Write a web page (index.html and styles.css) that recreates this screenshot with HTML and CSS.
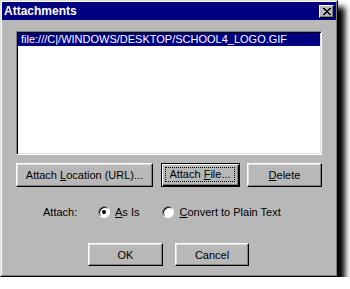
FILE: index.html
```html
<!DOCTYPE html>
<html lang="en">
<head>
    <meta charset="UTF-8">
    <title>Attachments</title>
    <link rel="stylesheet" href="styles.css">
</head>
<body>
    <div class="dialog">
        <div class="titlebar">
            <span class="title">Attachments</span>
            <button class="close" type="button">
                <svg width="8" height="7" viewBox="0 0 8 7">
                    <path d="M0 0h2v1h1v1h2v-1h1v-1h2v1h-1v1h-1v1h-1v1h1v1h1v1h1v1h-2v-1h-1v-1h-2v1h-1v1h-2v-1h1v-1h1v-1h1v-1h-1v-1h-1v-1h-1z" fill="#000"/>
                </svg>
            </button>
        </div>
        <div class="content">
            <div class="list">
                <div class="item selected">file:///C|/WINDOWS/DESKTOP/SCHOOL4_LOGO.GIF</div>
            </div>
            <div class="buttons">
                <button class="btn btn-location" type="button">Attach <u>L</u>ocation (URL)...</button>
                <button class="btn btn-file focused" type="button"><span class="focus">Attach <u>F</u>ile...</span></button>
                <button class="btn btn-delete" type="button"><u>D</u>elete</button>
            </div>
            <div class="attach-row">
                <span class="attach-label">Attach:</span>
                <span class="radio checked"></span>
                <span class="radio-label"><u>A</u>s Is</span>
                <span class="radio second"></span>
                <span class="radio-label"><u>C</u>onvert to Plain Text</span>
            </div>
            <div class="actions">
                <button class="btn btn-ok" type="button">OK</button>
                <button class="btn btn-cancel" type="button">Cancel</button>
            </div>
        </div>
    </div>
</body>
</html>
```

FILE: styles.css
```css
body {
    margin: 0;
    padding: 0;
    background: #fff;
    font-family: "Liberation Sans", Arial, sans-serif;
    font-size: 11px;
    color: #000;
}

.dialog {
    width: 338px;
    height: 277px;
    box-sizing: border-box;
    padding: 1px;
    background: #b8b8b8;
    border: 1px solid;
    border-color: #dfdfdf #000 #000 #dfdfdf;
    box-shadow: inset -1px -1px #808080, inset 1px 1px #fff, 7px 7px 6px #000;
}

.titlebar {
    height: 18px;
    background: #000080;
    display: flex;
    align-items: center;
    justify-content: space-between;
    padding: 0 2px 0 2px;
}

.title {
    color: #fff;
    font-weight: bold;
    font-size: 12px;
}

.close {
    width: 15px;
    height: 13px;
    padding: 0;
    margin: 0;
    display: flex;
    align-items: center;
    justify-content: center;
    background: #b8b8b8;
    border: 1px solid;
    border-color: #fff #000 #000 #fff;
    box-shadow: inset -1px -1px #808080;
}

.content {
    padding: 11px 0 0 14px;
}

.list {
    width: 306px;
    height: 124px;
    box-sizing: border-box;
    background: #fff;
    border: 1px solid;
    border-color: #808080 #fff #fff #808080;
    box-shadow: inset 1px 1px #000, inset -1px -1px #dfdfdf;
    padding: 1px;
}

.item {
    height: 13px;
    line-height: 13px;
    padding-left: 3px;
    white-space: nowrap;
}

.item.selected {
    background: #000080;
    color: #fff;
}

.buttons {
    display: flex;
    margin-top: 8px;
}

.btn {
    height: 24px;
    box-sizing: border-box;
    padding: 0;
    margin: 0;
    background: #b8b8b8;
    font-family: "Liberation Sans", Arial, sans-serif;
    font-size: 11px;
    color: #000;
    border: 1px solid;
    border-color: #fff #000 #000 #fff;
    box-shadow: inset -1px -1px #808080, inset 1px 1px #dfdfdf;
}

.btn u {
    text-decoration: underline;
    text-underline-offset: 1px;
}

.btn-location {
    width: 137px;
}

.btn-file {
    width: 79px;
    margin-left: 8px;
}

.btn-delete {
    width: 75px;
    margin-left: 7px;
}

.btn.focused {
    border: 1px solid #000;
    box-shadow: inset 1px 1px #fff, inset -1px -1px #000, inset -2px -2px #808080;
    padding: 3px 4px 4px 3px;
}

.focus {
    display: block;
    height: 100%;
    line-height: 13px;
    border: 1px dotted #000;
    box-sizing: border-box;
    text-align: center;
}

.attach-row {
    display: flex;
    align-items: center;
    height: 14px;
    margin-top: 18px;
    padding-left: 27px;
}

.attach-label {
    width: 55px;
}

.radio {
    width: 12px;
    height: 12px;
    box-sizing: border-box;
    border-radius: 50%;
    background: #fff;
    border: 1px solid;
    border-color: #808080 #fff #fff #808080;
    box-shadow: inset 1px 1px #000;
    display: flex;
    align-items: center;
    justify-content: center;
}

.radio.checked::after {
    content: "";
    width: 4px;
    height: 4px;
    border-radius: 50%;
    background: #000;
}

.radio-label {
    margin-left: 5px;
}

.radio.second {
    margin-left: 23px;
}

.actions {
    display: flex;
    margin-top: 24px;
    padding-left: 72px;
}

.btn-ok {
    width: 75px;
    height: 23px;
}

.btn-cancel {
    width: 74px;
    height: 23px;
    margin-left: 12px;
}
```
